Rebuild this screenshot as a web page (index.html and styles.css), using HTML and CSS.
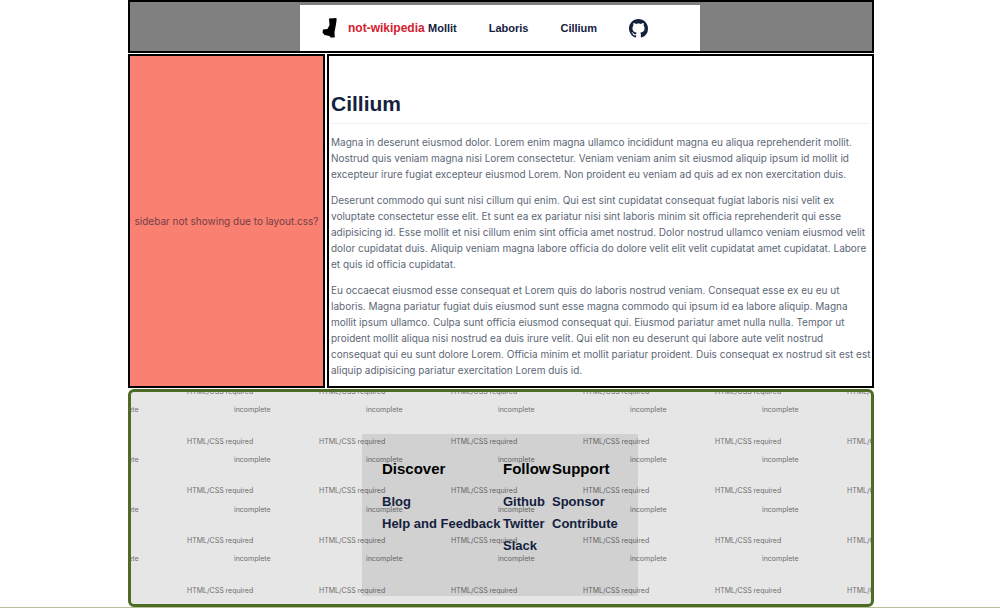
FILE: index.html
```
<!DOCTYPE html>
<html lang="en">
<head>
<meta charset="utf-8">
<meta name="viewport" content="width=device-width, initial-scale=1">
<title>Cillium</title>
<link rel="stylesheet" href="styles.css">
</head>
<body>
<div class="page">
  <header class="header">
    <div class="navbar">
      <a class="brand" href="#">
        <svg class="boot" viewBox="0 0 16 20" aria-hidden="true"><path d="M7 0.5 14.5 0 14.5 3 13.5 9 12.5 14 12.8 19.5 8.5 19.5 7.5 18 2.5 17 0.5 14.5 1 11.5 5.5 11 7.5 7Z"/></svg>
        <span class="brand-name">not-wikipedia</span>
      </a>
      <nav class="nav">
        <a href="#">Mollit</a>
        <a href="#">Laboris</a>
        <a href="#">Cillium</a>
        <a class="github" href="#" aria-label="GitHub"><svg viewBox="0 0 16 16" aria-hidden="true"><path d="M8 0C3.58 0 0 3.58 0 8c0 3.54 2.29 6.53 5.47 7.59.4.07.55-.17.55-.38 0-.19-.01-.82-.01-1.49-2.01.37-2.53-.49-2.69-.94-.09-.23-.48-.94-.82-1.13-.28-.15-.68-.52-.01-.53.63-.01 1.08.58 1.23.82.72 1.21 1.87.87 2.33.66.07-.52.28-.87.51-1.07-1.78-.2-3.64-.89-3.64-3.95 0-.87.31-1.59.82-2.15-.08-.2-.36-1.02.08-2.12 0 0 .67-.21 2.2.82.64-.18 1.32-.27 2-.27s1.36.09 2 .27c1.53-1.04 2.2-.82 2.2-.82.44 1.1.16 1.92.08 2.12.51.56.82 1.27.82 2.15 0 3.07-1.87 3.75-3.65 3.95.29.25.54.73.54 1.48 0 1.07-.01 1.93-.01 2.2 0 .21.15.46.55.38A8.01 8.01 0 0 0 16 8c0-4.42-3.58-8-8-8Z"/></svg></a>
      </nav>
    </div>
  </header>

  <div class="columns">
    <aside class="sidebar">sidebar not showing due to layout.css?</aside>
    <main class="content">
      <h1>Cillium</h1>
      <p>Magna in deserunt eiusmod dolor. Lorem enim magna ullamco incididunt magna eu aliqua reprehenderit mollit.<br>Nostrud quis veniam magna nisi Lorem consectetur. Veniam veniam anim sit eiusmod aliquip ipsum id mollit id<br>excepteur irure fugiat excepteur eiusmod Lorem. Non proident eu veniam ad quis ad ex non exercitation duis.</p>
      <p>Deserunt commodo qui sunt nisi cillum qui enim. Qui est sint cupidatat consequat fugiat laboris nisi velit ex<br>voluptate consectetur esse elit. Et sunt ea ex pariatur nisi sint laboris minim sit officia reprehenderit qui esse<br>adipisicing id. Esse mollit et nisi cillum enim sint officia amet nostrud. Dolor nostrud ullamco veniam eiusmod velit<br>dolor cupidatat duis. Aliquip veniam magna labore officia do dolore velit elit velit cupidatat amet cupidatat. Labore<br>et quis id officia cupidatat.</p>
      <p>Eu occaecat eiusmod esse consequat et Lorem quis do laboris nostrud veniam. Consequat esse ex eu eu ut<br>laboris. Magna pariatur fugiat duis eiusmod sunt esse magna commodo qui ipsum id ea labore aliquip. Magna<br>mollit ipsum ullamco. Culpa sunt officia eiusmod consequat qui. Eiusmod pariatur amet nulla nulla. Tempor ut<br>proident mollit aliqua nisi nostrud ea duis irure velit. Qui elit non eu deserunt qui labore aute velit nostrud<br>consequat qui eu sunt dolore Lorem. Officia minim et mollit pariatur proident. Duis consequat ex nostrud sit est est<br>aliquip adipisicing pariatur exercitation Lorem duis id.</p>
    </main>
  </div>

  <footer class="footer">
    <svg class="notes" aria-hidden="true">
      <g>
        <text x="56" y="2">HTML/CSS required</text><text x="188" y="2">HTML/CSS required</text><text x="320" y="2">HTML/CSS required</text><text x="452" y="2">HTML/CSS required</text><text x="584" y="2">HTML/CSS required</text><text x="716" y="2">HTML/CSS required</text>
        <text x="-29" y="20">incomplete</text><text x="103" y="20">incomplete</text><text x="235" y="20">incomplete</text><text x="367" y="20">incomplete</text><text x="499" y="20">incomplete</text><text x="631" y="20">incomplete</text>
        <text x="56" y="52">HTML/CSS required</text><text x="188" y="52">HTML/CSS required</text><text x="320" y="52">HTML/CSS required</text><text x="452" y="52">HTML/CSS required</text><text x="584" y="52">HTML/CSS required</text><text x="716" y="52">HTML/CSS required</text>
        <text x="-29" y="70">incomplete</text><text x="103" y="70">incomplete</text><text x="235" y="70">incomplete</text><text x="367" y="70">incomplete</text><text x="499" y="70">incomplete</text><text x="631" y="70">incomplete</text>
        <text x="56" y="101">HTML/CSS required</text><text x="188" y="101">HTML/CSS required</text><text x="320" y="101">HTML/CSS required</text><text x="452" y="101">HTML/CSS required</text><text x="584" y="101">HTML/CSS required</text><text x="716" y="101">HTML/CSS required</text>
        <text x="-29" y="120">incomplete</text><text x="103" y="120">incomplete</text><text x="235" y="120">incomplete</text><text x="367" y="120">incomplete</text><text x="499" y="120">incomplete</text><text x="631" y="120">incomplete</text>
        <text x="56" y="151">HTML/CSS required</text><text x="188" y="151">HTML/CSS required</text><text x="320" y="151">HTML/CSS required</text><text x="452" y="151">HTML/CSS required</text><text x="584" y="151">HTML/CSS required</text><text x="716" y="151">HTML/CSS required</text>
        <text x="-29" y="169">incomplete</text><text x="103" y="169">incomplete</text><text x="235" y="169">incomplete</text><text x="367" y="169">incomplete</text><text x="499" y="169">incomplete</text><text x="631" y="169">incomplete</text>
        <text x="56" y="201">HTML/CSS required</text><text x="188" y="201">HTML/CSS required</text><text x="320" y="201">HTML/CSS required</text><text x="452" y="201">HTML/CSS required</text><text x="584" y="201">HTML/CSS required</text><text x="716" y="201">HTML/CSS required</text>
      </g>
    </svg>
    <div class="links">
      <section><h2>Discover</h2><ul><li><a href="#">Blog</a></li><li><a href="#">Help and Feedback</a></li></ul></section>
      <section><h2>Follow</h2><ul><li><a href="#">Github</a></li><li><a href="#">Twitter</a></li><li><a href="#">Slack</a></li></ul></section>
      <section><h2>Support</h2><ul><li><a href="#">Sponsor</a></li><li><a href="#">Contribute</a></li></ul></section>
    </div>
  </footer>
</div>
<div class="baseline"></div>
</body>
</html>
```
FILE: styles.css
```
* { box-sizing: border-box; }

body {
  margin: 0;
  background: #fefefe;
  color: #5c6775;
  font-family: "Liberation Sans", Arial, sans-serif;
  font-size: 11px;
  line-height: 16px;
}

a { color: #14213d; text-decoration: none; }

.page {
  display: flex;
  flex-direction: column;
  gap: 1px;
  padding: 0 126px 0 128px;
}

.header {
  display: flex;
  justify-content: center;
  padding-top: 3px;
  background: #808080;
  border: 2px solid #000;
}

.navbar {
  display: flex;
  align-items: center;
  width: 400px;
  height: 46px;
  margin-right: 2px;
  padding-left: 22px;
  background: #fff;
}

.brand { display: flex; align-items: center; gap: 10px; }
.boot { width: 16px; height: 20px; fill: #000; }
.brand-name { width: 80px; color: #d6202f; font-size: 12px; font-weight: bold; white-space: nowrap; }

.nav { display: flex; align-items: center; gap: 32px; font-weight: bold; }
.github svg { display: block; width: 19px; height: 19px; fill: #14213d; }

.columns { display: grid; grid-template-columns: 197px minmax(0, 1fr); gap: 2px; }

.sidebar {
  display: flex;
  align-items: center;
  justify-content: center;
  background: #fa8072;
  border: 2px solid #000;
  color: #723f45;
  font-family: Inter, sans-serif;
  font-size: 10px;
  white-space: nowrap;
}

.content {
  padding: 34px 3px 8px 2px;
  border: 2px solid #000;
  background: #fff;
  white-space: nowrap;
}

h1 {
  margin: 0 0 10px;
  padding-bottom: 5px;
  border-bottom: 1px solid #f0f1f2;
  color: #14213d;
  font-size: 21px;
  line-height: 28px;
}

p { margin: 0 0 10px; font-family: Inter, sans-serif; font-size: 10px; }
p:last-child { margin: 0; }

.footer {
  position: relative;
  display: flex;
  justify-content: center;
  padding: 42px 0 8px;
  background: #e6e6e6;
  border: 3px solid #4d6b24;
  border-radius: 6px;
}

.notes {
  position: absolute;
  inset: 0;
  width: 100%;
  height: 100%;
  fill: #6e6e6e;
  font-family: Inter, sans-serif;
  font-size: 7px;
}

.links {
  position: relative;
  display: grid;
  grid-template-columns: 121px 49px 66px;
  height: 162px;
  margin-right: 2px;
  padding: 24px 20px;
  background: rgba(0, 0, 0, 0.09);
  white-space: nowrap;
}

h2 { margin: 0 0 11px; color: #000; font-size: 15px; line-height: 22px; }
ul { margin: 0; padding: 0; list-style: none; font-size: 13px; font-weight: bold; line-height: 22px; }

.baseline { height: 1px; background: #b5c09a; }
```
